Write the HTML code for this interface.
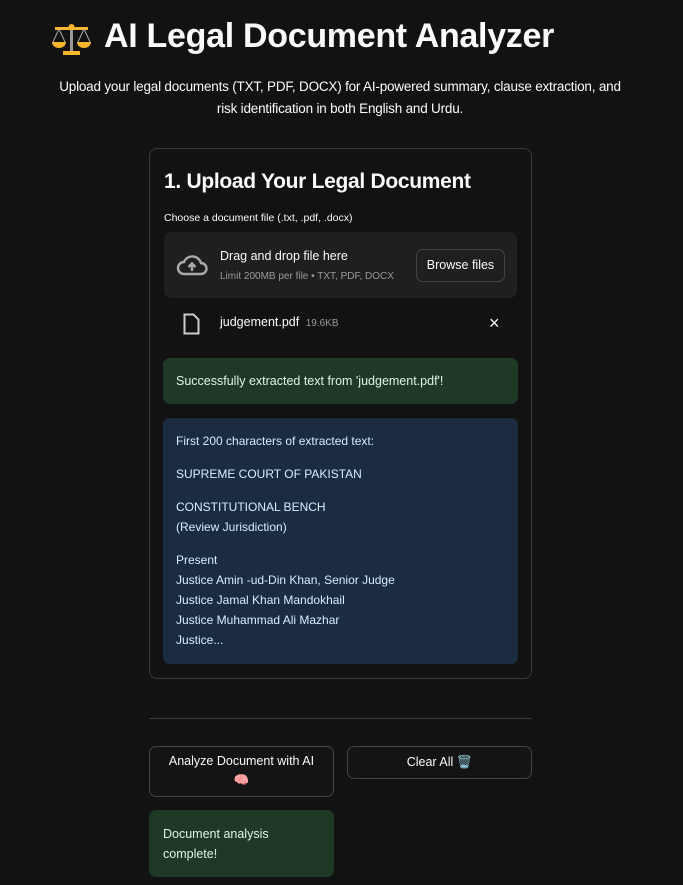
<!DOCTYPE html>
<html><head><style>
body{margin:0;background:#121212;width:683px;height:885px;overflow:hidden;font-family:"Liberation Sans",sans-serif;color:#fafafa;position:relative}
.a{position:absolute}
h1{position:absolute;left:104px;top:17px;margin:0;font-size:34px;font-weight:bold;letter-spacing:-0.3px}
.sub{left:30px;width:620px;top:76px;text-align:center;font-size:13.5px;line-height:22px;letter-spacing:-0.2px}
.card{left:149px;top:148px;width:381px;height:529px;border:1px solid #3a3a3a;border-radius:8px}
.h2{left:164px;top:170px;font-size:21px;font-weight:bold;letter-spacing:-0.3px}
.lbl{left:164px;top:212px;font-size:10.5px}
.drop{left:164px;top:232px;width:353px;height:66px;background:#1f1f1f;border-radius:7px}
.btn{border:1px solid #444;border-radius:7px;background:#141414;font-size:12.5px;text-align:center;box-sizing:border-box}
.ok{background:#1e3a27;border-radius:7px;color:#dff3e4;font-size:12.5px}
.info{left:163px;top:418px;width:355px;height:246px;background:#1b2c40;border-radius:7px;color:#d6ecff;font-size:12px}
.info div{position:absolute;left:13px;line-height:20px}
</style></head><body>
<svg class="a" style="left:50px;top:22px" width="42" height="36" viewBox="0 0 42 36">
<rect x="20" y="4" width="3" height="26" fill="#999"/><rect x="5" y="5" width="33" height="3" fill="#f5b52c"/>
<circle cx="21.5" cy="5" r="3" fill="#f5b52c"/>
<path d="M2 20h14a7 6 0 0 1-14 0zM27 20h14a7 6 0 0 1-14 0z" fill="#f5b52c"/>
<path d="M9 7L3 20M9 7l6 13M34 7l-6 13M34 7l6 13" stroke="#aaa" stroke-width="1"/>
<rect x="13" y="29" width="17" height="4" fill="#f5b52c"/></svg>
<h1>AI Legal Document Analyzer</h1>
<div class="a sub">Upload your legal documents (TXT, PDF, DOCX) for AI-powered summary, clause extraction, and<br>risk identification in both English and Urdu.</div>
<div class="a card"></div>
<div class="a h2">1. Upload Your Legal Document</div>
<div class="a lbl">Choose a document file (.txt, .pdf, .docx)</div>
<div class="a drop"></div>
<svg class="a" style="left:176px;top:254px" width="32" height="22" viewBox="0 0 32 22"><path d="M8 20a6 6 0 0 1 0-12 9 9 0 0 1 17 1 5.5 5.5 0 0 1 0 11z" fill="none" stroke="#aaa" stroke-width="2.4"/><path d="M16 17v-7M12.5 13l3.5-3.5 3.5 3.5" stroke="#aaa" stroke-width="2.4" fill="none"/></svg>
<div class="a" style="left:220px;top:249px;font-size:12.5px">Drag and drop file here</div>
<div class="a" style="left:220px;top:271px;font-size:10px;color:#9a9a9a">Limit 200MB per file • TXT, PDF, DOCX</div>
<div class="a btn" style="left:416px;top:249px;width:89px;height:33px;line-height:31px;background:#1f1f1f">Browse files</div>
<svg class="a" style="left:183px;top:313px" width="17" height="22" viewBox="0 0 17 22"><path d="M1.5 1.5h9l5 5v14h-14z" fill="none" stroke="#ccc" stroke-width="2"/></svg>
<div class="a" style="left:220px;top:315px;font-size:12.5px">judgement.pdf <span style="font-size:10px;color:#9a9a9a;margin-left:3px">19.6KB</span></div>
<div class="a" style="left:489px;top:313px;font-size:18px">×</div>
<div class="a ok" style="left:163px;top:358px;width:355px;height:46px;line-height:46px;text-indent:13px">Successfully extracted text from 'judgement.pdf'!</div>
<div class="a info">
<div style="top:13px">First 200 characters of extracted text:</div>
<div style="top:46px">SUPREME COURT OF PAKISTAN</div>
<div style="top:79px">CONSTITUTIONAL BENCH<br>(Review Jurisdiction)</div>
<div style="top:132px">Present<br>Justice Amin -ud-Din Khan, Senior Judge<br>Justice Jamal Khan Mandokhail<br>Justice Muhammad Ali Mazhar<br>Justice...</div>
</div>
<div class="a" style="left:149px;top:718px;width:383px;height:1px;background:#3a3a3a"></div>
<div class="a btn" style="left:149px;top:746px;width:185px;height:51px;padding-top:5px;line-height:19px">Analyze Document with AI<br>🧠</div>
<div class="a btn" style="left:347px;top:746px;width:185px;height:33px;line-height:31px">Clear All 🗑️</div>
<div class="a ok" style="left:149px;top:810px;width:185px;height:67px;box-sizing:border-box;padding:14px 14px;line-height:20px">Document analysis complete!</div>
</body></html>
